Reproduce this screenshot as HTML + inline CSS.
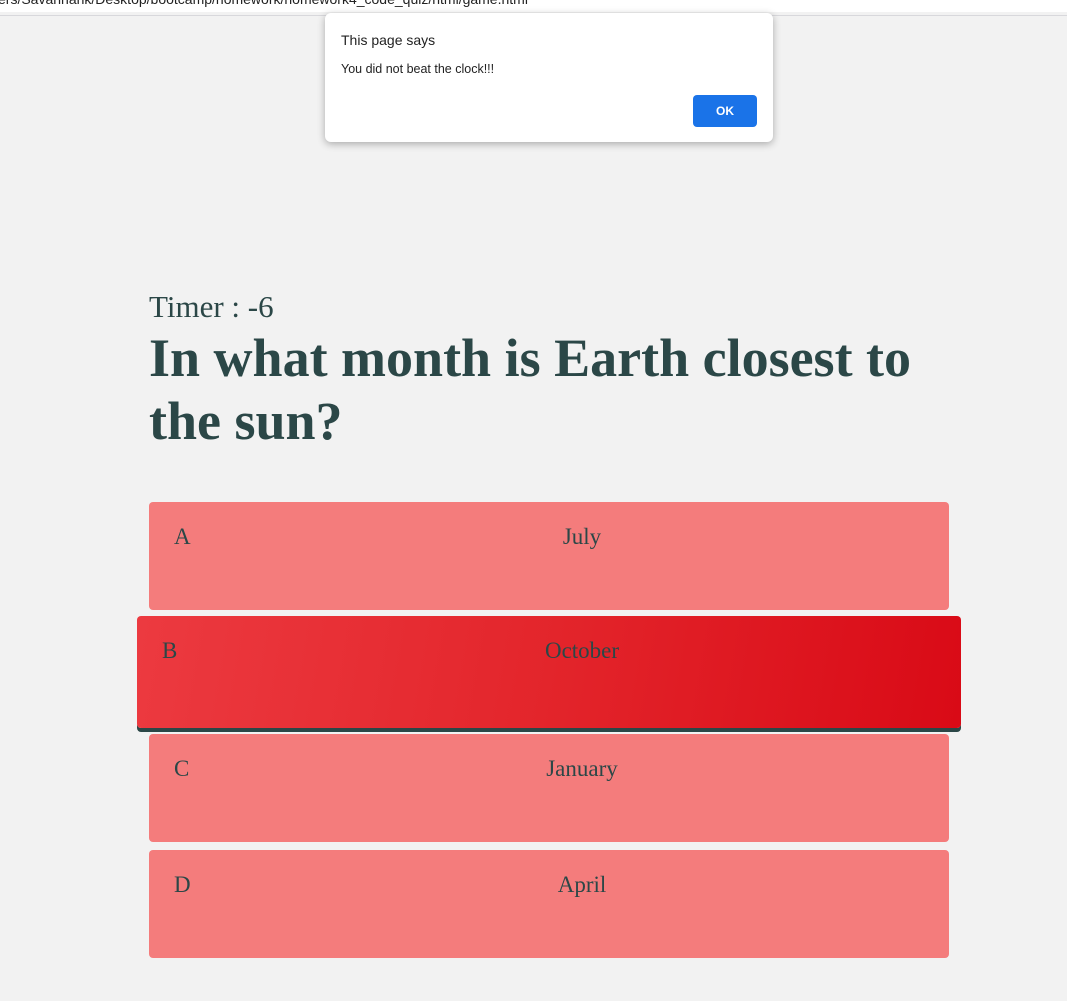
<!DOCTYPE html>
<html><head><style>
body{margin:0;width:1067px;height:1001px;background:#f2f2f2;font-family:"Liberation Serif",serif;color:#2b4747;position:relative;overflow:hidden}
.url{position:absolute;left:0;top:0;width:1067px;height:12px;background:#fff;font-family:"Liberation Sans",sans-serif;font-size:14px;line-height:1;color:#222;overflow:hidden;white-space:nowrap}
.url span{position:relative;top:-8px;left:-2px}
.line{position:absolute;left:0;top:15px;width:1067px;height:1px;background:#d8d8dc}
.dlg{position:absolute;left:325px;top:13px;width:448px;height:129px;background:#fff;border-radius:6px;box-shadow:0 2px 8px rgba(0,0,0,.3);font-family:"Liberation Sans",sans-serif;color:#222}
.dlg .t{position:absolute;left:16px;top:19px;font-size:14px}
.dlg .m{position:absolute;left:16px;top:49px;font-size:12.5px}
.dlg .ok{position:absolute;left:368px;top:82px;width:64px;height:32px;background:#1a73e8;border-radius:4px;color:#fff;font-size:12px;font-weight:bold;text-align:center;line-height:32px}
.timer{position:absolute;left:149px;top:289px;font-size:31px}
h1{position:absolute;left:149px;top:327px;margin:0;font-size:54px;line-height:63px;width:790px}
.b{position:absolute;left:149px;width:800px;height:108px;background:#f47c7c;border-radius:4px;font-size:23px}
.b .l{position:absolute;left:25px;top:22px}
.b .c{position:absolute;left:0;right:0;top:22px;text-align:center;padding-left:66px}
.b.sel{left:137px;width:824px;height:112px;background:linear-gradient(100deg,#ec3a40,#e3252b 50%,#d90a16);box-shadow:0 4px 0 #2b4747}
</style></head><body>
<div class="url"><span>ers/Savannahk/Desktop/bootcamp/homework/homework4_code_quiz/html/game.html</span></div>
<div class="line"></div>
<div class="dlg"><div class="t">This page says</div><div class="m">You did not beat the clock!!!</div><div class="ok">OK</div></div>
<div class="timer">Timer : -6</div>
<h1>In what month is Earth closest to the sun?</h1>
<div class="b" style="top:502px"><span class="l">A</span><div class="c">July</div></div>
<div class="b sel" style="top:616px"><span class="l">B</span><div class="c" style="padding-left:66px">October</div></div>
<div class="b" style="top:734px"><span class="l">C</span><div class="c">January</div></div>
<div class="b" style="top:850px"><span class="l">D</span><div class="c">April</div></div>
</body></html>
